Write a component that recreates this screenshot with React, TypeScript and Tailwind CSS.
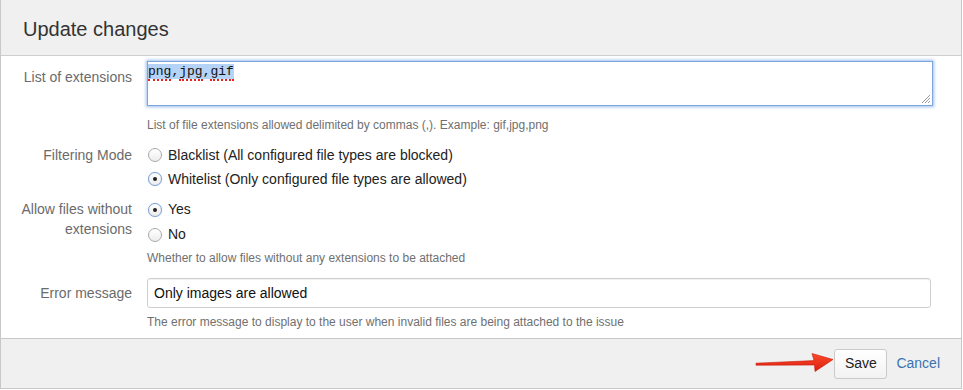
import React from "react";

function Radio({ checked }: { checked?: boolean }) {
  return (
    <span
      className={
        "relative inline-block h-[14px] w-[14px] shrink-0 rounded-full border bg-gradient-to-b from-white to-[#ececec] " +
        (checked ? "border-[#7d9fcf] shadow-[0_0_1px_#9ab8e6]" : "border-[#a8a8a8]")
      }
    >
      {checked && (
        <span className="absolute left-1/2 top-1/2 h-[4px] w-[4px] -translate-x-1/2 -translate-y-1/2 rounded-full bg-[#222]" />
      )}
    </span>
  );
}

function Spell({ children }: { children: React.ReactNode }) {
  return <span className="border-b-2 border-dotted border-[#e8231a]">{children}</span>;
}

export default function App() {
  const font = { fontFamily: '"Liberation Sans", Arial, sans-serif' };
  return (
    <div className="relative w-[962px] bg-white" style={font}>
      <div className="border-l border-r border-[#c8c8c8]">
        {/* Header */}
        <div className="flex h-[56px] items-center border-b border-[#cfcfcf] bg-[#f0f0f0] pl-[22px] pt-[3px]">
          <h2 className="text-[20px] leading-6 text-[#333]">Update changes</h2>
        </div>

        {/* Body */}
        <div className="pb-[8px] pt-[5px] text-[14px]">
          {/* List of extensions */}
          <div className="flex">
            <div className="w-[131px] shrink-0 pt-[6px] text-right leading-5 text-[#6b6b6b]">
              List of extensions
            </div>
            <div className="ml-[15px] flex-1 pr-[29px]">
              <div className="relative h-[45px] w-[786px] border border-[#7ea6dd] bg-white shadow-[0_0_3px_1px_#9cbfee] ">
                <div
                  className="pt-[3px] text-[13px] leading-[13px] text-[#111]"
                  style={{ fontFamily: '"Liberation Mono", "Courier New", monospace' }}
                >
                  <span className="bg-[#b5d3f7]">
                    <Spell>png</Spell>,<Spell>jpg</Spell>,<Spell>gif</Spell>
                  </span>
                </div>
                <svg className="absolute bottom-[1px] right-[1px]" width="11" height="11" viewBox="0 0 11 11">
                  <line x1="10" y1="2" x2="2" y2="10" stroke="#9a9a9a" strokeWidth="1" />
                  <line x1="10" y1="5" x2="5" y2="10" stroke="#9a9a9a" strokeWidth="1" />
                  <line x1="10" y1="8" x2="8" y2="10" stroke="#9a9a9a" strokeWidth="1" />
                </svg>
              </div>
              <div className="mt-[11px] text-[12px] leading-4 text-[#707070]">
                List of file extensions allowed delimited by commas (,). Example: gif,jpg,png
              </div>
            </div>
          </div>

          {/* Filtering mode */}
          <div className="mt-[10px] flex">
            <div className="w-[131px] shrink-0 text-right leading-6 text-[#6b6b6b]">Filtering Mode</div>
            <div className="ml-[15px] flex flex-col">
              <label className="flex h-6 items-center gap-[6px] pl-[1px] text-[#222]">
                <Radio />
                <span>Blacklist (All configured file types are blocked)</span>
              </label>
              <label className="flex h-6 items-center gap-[6px] pl-[1px] text-[#222]">
                <Radio checked />
                <span>Whitelist (Only configured file types are allowed)</span>
              </label>
            </div>
          </div>

          {/* Allow files */}
          <div className="mt-[6px] flex">
            <div className="w-[131px] shrink-0 pt-[2px] text-right leading-5 text-[#6b6b6b]">
              Allow files without
              <br />
              extensions
            </div>
            <div className="ml-[15px] flex flex-col">
              <label className="flex h-[25px] items-center gap-[6px] pl-[1px] text-[#222]">
                <Radio checked />
                <span>Yes</span>
              </label>
              <label className="flex h-[25px] items-center gap-[6px] pl-[1px] text-[#222]">
                <Radio />
                <span>No</span>
              </label>
              <div className="mt-[3px] text-[12px] leading-4 text-[#707070]">
                Whether to allow files without any extensions to be attached
              </div>
            </div>
          </div>

          {/* Error message */}
          <div className="mt-[12px] flex">
            <div className="w-[131px] shrink-0 pt-[5px] text-right leading-5 text-[#6b6b6b]">Error message</div>
            <div className="ml-[15px] flex-1 pr-[31px]">
              <div className="flex h-[30px] w-[784px] items-center rounded-[3px] border border-[#cfcfcf] bg-white pl-[6px] text-[#111] shadow-[inset_0_1px_1px_rgba(0,0,0,0.06)]">
                Only images are allowed
              </div>
              <div className="mt-[6px] text-[12px] leading-4 text-[#707070]">
                The error message to display to the user when invalid files are being attached to the issue
              </div>
            </div>
          </div>
        </div>

        {/* Footer */}
        <div className="flex h-[51px] items-center justify-end border-b border-t border-[#c8c8c8] bg-[#f0f0f0] pr-[21px]">
          <button className="relative h-[30px] w-[53px] rounded-[3px] border border-[#cacaca] bg-gradient-to-b from-white to-[#f2f2f2] text-[14px] text-[#222]">
            Save
          </button>
          <a className="ml-[9px] text-[14px] text-[#3b73af]">Cancel</a>
        </div>
      </div>

      {/* Red annotation arrow */}
      <svg className="absolute left-[754px] top-[350px]" width="82" height="26" viewBox="0 0 82 26">
        <defs>
          <linearGradient id="ag" x1="0" y1="0" x2="0" y2="1">
            <stop offset="0" stopColor="#ff4a2a" />
            <stop offset="1" stopColor="#d81e10" />
          </linearGradient>
        </defs>
        <path
          d="M2 13.2 L60 10.6 L58 3.5 L79 9.5 L61 21.5 L60.5 15 L2 15.2 Z"
          fill="url(#ag)"
          stroke="#c81a0c"
          strokeWidth="0.6"
          strokeLinejoin="round"
        />
      </svg>
    </div>
  );
}
